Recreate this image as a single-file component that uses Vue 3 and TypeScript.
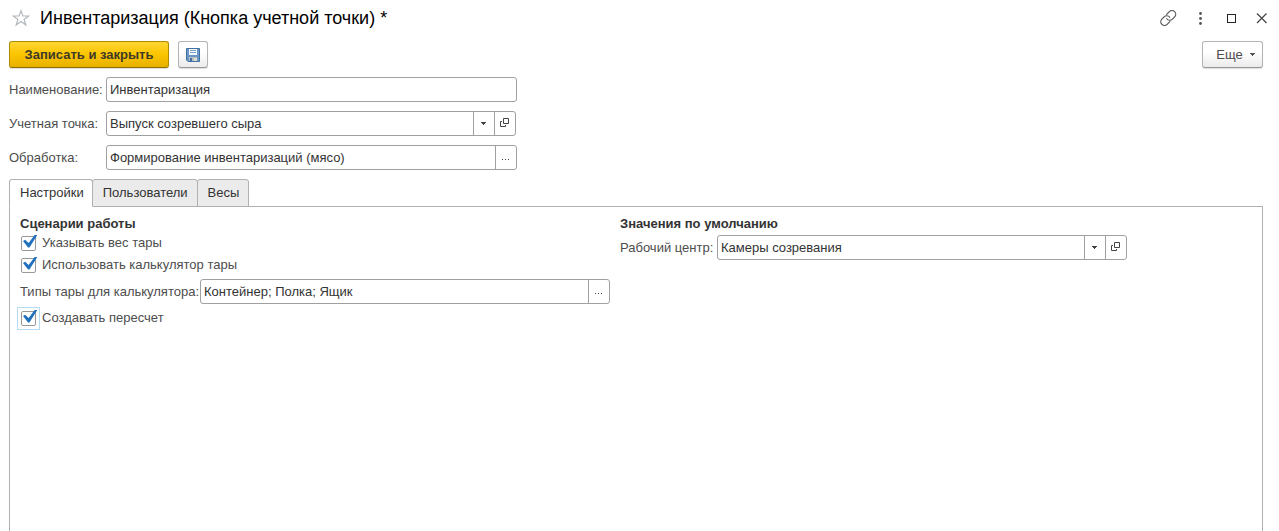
<script setup lang="ts">
import { ref } from 'vue'

type FieldKind = 'text' | 'select' | 'dots'

interface Field {
  id: string
  label: string
  value: string
  kind: FieldKind
}

const fields = ref<Field[]>([
  { id: 'name', label: 'Наименование:', value: 'Инвентаризация', kind: 'text' },
  { id: 'point', label: 'Учетная точка:', value: 'Выпуск созревшего сыра', kind: 'select' },
  { id: 'processing', label: 'Обработка:', value: 'Формирование инвентаризаций (мясо)', kind: 'dots' },
])

const tabs = ['Настройки', 'Пользователи', 'Весы']
const activeTab = ref('Настройки')

const useWeight = ref(true)
const useCalculator = ref(true)
const createRecount = ref(true)
const tareTypes = ref('Контейнер; Полка; Ящик')
const workCenter = ref('Камеры созревания')
</script>

<template>
  <main class="window">
    <header class="titlebar">
      <button class="icon-btn" type="button" aria-label="Добавить в избранное">
        <svg width="18" height="18" viewBox="0 0 18 18" fill="none" stroke="#b3b8be" stroke-width="1.2">
          <path d="M9 1.6 10.9 7H16.6L12.1 10.4 13.8 16 9 12.6 4.2 16 5.9 10.4 1.4 7H7.1Z" />
        </svg>
      </button>
      <h1>Инвентаризация (Кнопка учетной точки) *</h1>
      <div class="window-tools">
        <button class="icon-btn" type="button" aria-label="Получить ссылку">
          <svg width="18" height="18" viewBox="1 0 24 24" fill="none" stroke="#555" stroke-width="1.6" stroke-linecap="round">
            <path d="M10 13a5 5 0 0 0 7.54.54l3-3a5 5 0 0 0-7.07-7.07l-3.6 3.6" />
            <path d="M14 11a5 5 0 0 0-7.54-.54l-3 3a5 5 0 0 0 7.07 7.07l3.6-3.6" />
          </svg>
        </button>
        <button class="icon-btn" type="button" aria-label="Меню">
          <svg width="18" height="18" viewBox="0 0 18 18" fill="#555">
            <circle cx="9.5" cy="4.5" r="1.4" /><circle cx="9.5" cy="9.5" r="1.4" /><circle cx="9.5" cy="14.5" r="1.4" />
          </svg>
        </button>
        <button class="icon-btn" type="button" aria-label="Развернуть">
          <svg width="18" height="18" viewBox="0 0 18 18" fill="none" stroke="#222">
            <rect x="5.5" y="5.5" width="8" height="8" />
          </svg>
        </button>
        <button class="icon-btn" type="button" aria-label="Закрыть">
          <svg width="18" height="18" viewBox="0 0 18 18" fill="none" stroke="#444" stroke-width="1.2">
            <path d="M4 4.5 13.5 14M13.5 4.5 4 14" />
          </svg>
        </button>
      </div>
    </header>

    <div class="toolbar">
      <button class="btn primary" type="button">Записать и закрыть</button>
      <button class="btn save" type="button" aria-label="Записать">
        <svg width="14" height="14" viewBox="0 0 14 14">
          <path d="M.5.5H13.5V13.5H2L.5 12Z" fill="#6897c8" stroke="#42709f" />
          <rect x="3" y="1" width="8" height="6" fill="#f4f7fb" />
          <path d="M4 2.5H10M4 4.5H10" stroke="#7ea3cb" />
          <rect x="3" y="9" width="8" height="4" fill="#b9bfc1" />
          <rect x="4" y="10" width="2" height="3" fill="#42709f" />
          <rect x="8" y="10" width="3" height="3" fill="#dedfce" />
        </svg>
      </button>
      <button class="btn more" type="button">
        Еще
        <svg width="5" height="3" viewBox="0 0 5 3" shape-rendering="crispEdges"><path d="M0 0h5v1H4v1H3v1H2V2H1V1H0z" fill="#555" /></svg>
      </button>
    </div>

    <form class="fields" @submit.prevent>
      <div v-for="f in fields" :key="f.id" class="row">
        <label class="label" :for="f.id">{{ f.label }}</label>
        <div class="box" :class="{ linked: f.kind === 'select' }">
          <input :id="f.id" v-model="f.value" type="text" />
          <template v-if="f.kind === 'select'">
            <button type="button" aria-label="Выбрать из списка">
              <svg width="6" height="4" viewBox="0 0 6 4" shape-rendering="crispEdges"><path d="M0 0h5v1H4v1H3v1H2V2H1V1H0z" fill="#444" /></svg>
            </button>
            <button type="button" aria-label="Открыть">
              <svg width="10" height="11" viewBox="0 0 10 11" fill="none" stroke="#444">
                <path d="M3.5.5H8.5V5.5H3.5ZM2 3.5H.5V8.5H5.5V7" />
              </svg>
            </button>
          </template>
          <button v-else-if="f.kind === 'dots'" type="button" aria-label="Выбрать">
            <svg width="8" height="6" viewBox="0 0 8 6" fill="#444"><path d="M0 4h1v1H0zM3 4h1v1H3zM6 4h1v1H6z" /></svg>
          </button>
        </div>
      </div>
    </form>

    <div class="tabs" role="tablist">
      <button
        v-for="t in tabs"
        :key="t"
        type="button"
        role="tab"
        class="tab"
        :class="{ active: t === activeTab }"
        :aria-selected="t === activeTab"
        @click="activeTab = t"
      >{{ t }}</button>
    </div>

    <section class="panel" role="tabpanel">
      <div class="column scenarios">
        <h2>Сценарии работы</h2>
        <label class="check"><input v-model="useWeight" type="checkbox" /><span>Указывать вес тары</span></label>
        <label class="check"><input v-model="useCalculator" type="checkbox" /><span>Использовать калькулятор тары</span></label>
        <div class="row tare">
          <label class="label wide" for="tare">Типы тары для калькулятора:</label>
          <div class="box">
            <input id="tare" v-model="tareTypes" type="text" />
            <button type="button" aria-label="Выбрать">
              <svg width="8" height="6" viewBox="0 0 8 6" fill="#444"><path d="M0 4h1v1H0zM3 4h1v1H3zM6 4h1v1H6z" /></svg>
            </button>
          </div>
        </div>
        <label class="check current"><input v-model="createRecount" type="checkbox" /><span>Создавать пересчет</span></label>
      </div>
      <div class="column defaults">
        <h2>Значения по умолчанию</h2>
        <div class="row">
          <label class="label" for="center">Рабочий центр:</label>
          <div class="box linked">
            <input id="center" v-model="workCenter" type="text" />
            <button type="button" aria-label="Выбрать из списка">
              <svg width="6" height="4" viewBox="0 0 6 4" shape-rendering="crispEdges"><path d="M0 0h5v1H4v1H3v1H2V2H1V1H0z" fill="#444" /></svg>
            </button>
            <button type="button" aria-label="Открыть">
              <svg width="10" height="11" viewBox="0 0 10 11" fill="none" stroke="#444">
                <path d="M3.5.5H8.5V5.5H3.5ZM2 3.5H.5V8.5H5.5V7" />
              </svg>
            </button>
          </div>
        </div>
      </div>
    </section>
  </main>
</template>

<style>
body {
  margin: 0;
  background: #fff;
}
</style>

<style scoped>
.window {
  box-sizing: border-box;
  display: flex;
  flex-direction: column;
  min-height: 100vh;
  padding: 0 16px 0 9px;
  font-family: "Liberation Sans", Arial, sans-serif;
  font-size: 13px;
  line-height: 16px;
  color: #4d4d4d;
}
button,
input {
  font: inherit;
  color: inherit;
}
button {
  padding: 0;
  cursor: pointer;
}
svg {
  display: block;
}
.titlebar {
  display: flex;
  align-items: center;
  height: 36px;
  padding-left: 3px;
  margin-right: -8px;
}
h1 {
  flex: 1;
  margin: 0 0 0 10px;
  font-size: 18px;
  line-height: 24px;
  font-weight: 400;
  color: #000;
}
.icon-btn {
  border: 0;
  background: none;
}
.window-tools {
  display: flex;
  gap: 13px;
}
.toolbar {
  display: flex;
  gap: 9px;
  margin: 5px 0 9px;
}
.btn {
  box-sizing: border-box;
  display: flex;
  align-items: center;
  justify-content: center;
  height: 27px;
  border: 1px solid #b4b4b4;
  border-bottom-color: #999;
  border-radius: 3px;
  background: linear-gradient(#fff 40%, #ebebeb);
  box-shadow: 0 1px 1px #ddd;
}
.primary {
  width: 160px;
  border-color: #b08d00;
  border-bottom-color: #8e7200;
  background: linear-gradient(#ffd633, #fbc400 50%, #e8b100);
  font-weight: 700;
  color: #403a26;
}
.save {
  width: 30px;
}
.more {
  gap: 7px;
  width: 61px;
  padding-left: 6px;
  margin-left: auto;
}
.fields {
  display: grid;
  gap: 9px;
  width: 508px;
  max-width: 100%;
}
.row {
  display: flex;
  align-items: center;
}
.label {
  flex: none;
  width: 97px;
  white-space: nowrap;
}
.label.wide {
  width: 180px;
}
.box {
  box-sizing: border-box;
  display: flex;
  flex: 1;
  min-width: 0;
  height: 25px;
  border: 1px solid #a0a0a0;
  border-radius: 3px;
  background: #fff;
}
.box.linked {
  margin-right: 1px;
}
.box input {
  flex: 1;
  min-width: 0;
  padding: 0 3px;
  border: 0;
  outline: 0;
  background: none;
  color: #333;
}
.box button {
  display: flex;
  align-items: center;
  justify-content: center;
  box-sizing: border-box;
  width: 21px;
  border: 0;
  border-left: 1px solid #a0a0a0;
  background: none;
}
.tabs {
  display: flex;
  margin-top: 9px;
}
.tab {
  box-sizing: border-box;
  height: 28px;
  padding: 0 9px 1px 10px;
  margin: 0 -1px -1px 0;
  border: 1px solid #b0b0b0;
  border-radius: 3px 3px 0 0;
  background: #ebebeb;
  color: #333;
}
.tab.active {
  z-index: 1;
  padding-right: 8px;
  border-bottom-color: #fff;
  background: #fff;
}
.panel {
  display: flex;
  flex: 1;
  align-items: flex-start;
  gap: 10px;
  padding: 9px 10px;
  border: 1px solid #b0b0b0;
  border-bottom: 0;
}
.column {
  display: flex;
  flex-direction: column;
}
.scenarios {
  width: 590px;
}
.defaults {
  width: 508px;
}
h2 {
  margin: 0;
  font-size: 13px;
  line-height: 16px;
  font-weight: 700;
  color: #333;
}
.defaults h2 {
  margin-bottom: 3px;
}
.check {
  display: flex;
  align-items: center;
  align-self: flex-start;
  gap: 5px;
  height: 22px;
}
.check input {
  appearance: none;
  box-sizing: border-box;
  width: 15px;
  height: 15px;
  margin: 0 1px;
  border: 1px solid #999;
  border-radius: 2px;
  background: #fff;
}
.check input:checked {
  position: relative;
}
.check input:checked::after {
  content: "";
  position: absolute;
  left: 1px;
  top: -2px;
  width: 14px;
  height: 13px;
  background: #2170bd;
  clip-path: polygon(0 50%, 15% 40%, 40% 66%, 86% 0, 100% 0, 100% 8%, 46% 100%, 36% 100%);
}
.current {
  position: relative;
}
.current::before {
  content: "";
  position: absolute;
  left: -3px;
  top: 0;
  box-sizing: border-box;
  width: 23px;
  height: 23px;
  border: 1px solid #b5dcf6;
}
.tare {
  margin: 3px 0;
}
</style>
